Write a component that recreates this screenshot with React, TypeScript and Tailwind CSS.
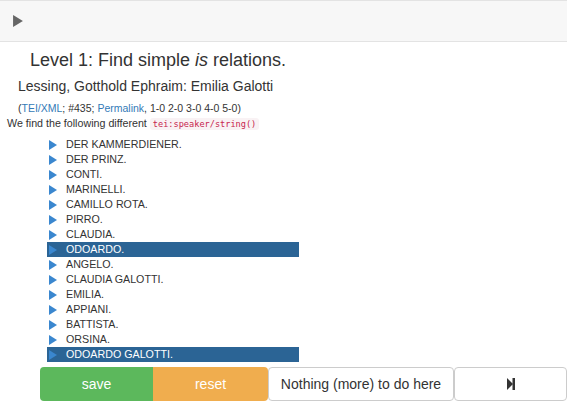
const speakers = [
  "DER KAMMERDIENER.",
  "DER PRINZ.",
  "CONTI.",
  "MARINELLI.",
  "CAMILLO ROTA.",
  "PIRRO.",
  "CLAUDIA.",
  "ODOARDO.",
  "ANGELO.",
  "CLAUDIA GALOTTI.",
  "EMILIA.",
  "APPIANI.",
  "BATTISTA.",
  "ORSINA.",
  "ODOARDO GALOTTI.",
];

const selected = new Set(["ODOARDO.", "ODOARDO GALOTTI."]);

function Triangle({ className }: { className: string }) {
  return (
    <svg viewBox="0 0 9 11" className={className}>
      <path d="M0 0 L9 5.5 L0 11 Z" fill="currentColor" />
    </svg>
  );
}

export default function App() {
  return (
    <div className="h-[402px] w-[567px] overflow-hidden bg-white font-['Liberation_Sans',Arial,sans-serif] text-[#333]">
      <div className="flex h-[42px] items-center border-y border-[#e3e3e3] bg-[#f7f7f7] pl-[13px]">
        <Triangle className="h-[12px] w-[10px] text-[#666]" />
      </div>

      <h1 className="mt-[6px] pl-[30px] text-[18px] leading-[24px]">
        Level 1: Find simple <i>is</i> relations.
      </h1>
      <h2 className="mt-[4px] pl-[18px] text-[14px] leading-[20px]">
        Lessing, Gotthold Ephraim: Emilia Galotti
      </h2>
      <p className="mt-[5px] pl-[18px] text-[10.5px] leading-[14px]">
        (<span className="text-[#337ab7]">TEI/XML</span>; #435;{" "}
        <span className="text-[#337ab7]">Permalink</span>, 1-0 2-0 3-0 4-0 5-0)
      </p>
      <p className="mt-[1px] pl-[7px] text-[10.7px] leading-[14px]">
        We find the following different{" "}
        <code className="rounded-[3px] bg-[#f9f2f4] px-[3px] py-[1px] font-['DejaVu_Sans_Mono',monospace] text-[8.6px] text-[#c7254e]">
          tei:speaker/string()
        </code>
      </p>

      <ul className="mt-[6px] ml-[47px] w-[252px]">
        {speakers.map((name) => {
          const on = selected.has(name);
          return (
            <li
              key={name}
              className={`flex h-[15px] items-center text-[10.7px] ${on ? "bg-[#2b6495] text-white" : "text-[#333]"}`}
            >
              <Triangle className="ml-[2px] mr-[9px] h-[10px] w-[8px] text-[#3a87cf]" />
              {name}
            </li>
          );
        })}
      </ul>

      <div className="mt-[5px] flex h-[34px] pl-[40px] text-[14px]">
        <button className="w-[113px] rounded-l-[4px] bg-[#5cb85c] text-white">save</button>
        <button className="w-[115px] rounded-r-[4px] bg-[#f0ad4e] text-white">reset</button>
        <button className="w-[186px] rounded-[4px] border border-[#ccc] bg-white text-[#333]">
          Nothing (more) to do here
        </button>
        <button className="flex w-[113px] items-center justify-center rounded-[4px] border border-[#ccc] bg-white text-[#333]">
          <svg width="8" height="12" viewBox="0 0 8 12">
            <path d="M0 0 L6 6 L0 12 Z" fill="currentColor" />
            <rect x="5.5" y="0" width="2.5" height="12" fill="currentColor" />
          </svg>
        </button>
      </div>
    </div>
  );
}
